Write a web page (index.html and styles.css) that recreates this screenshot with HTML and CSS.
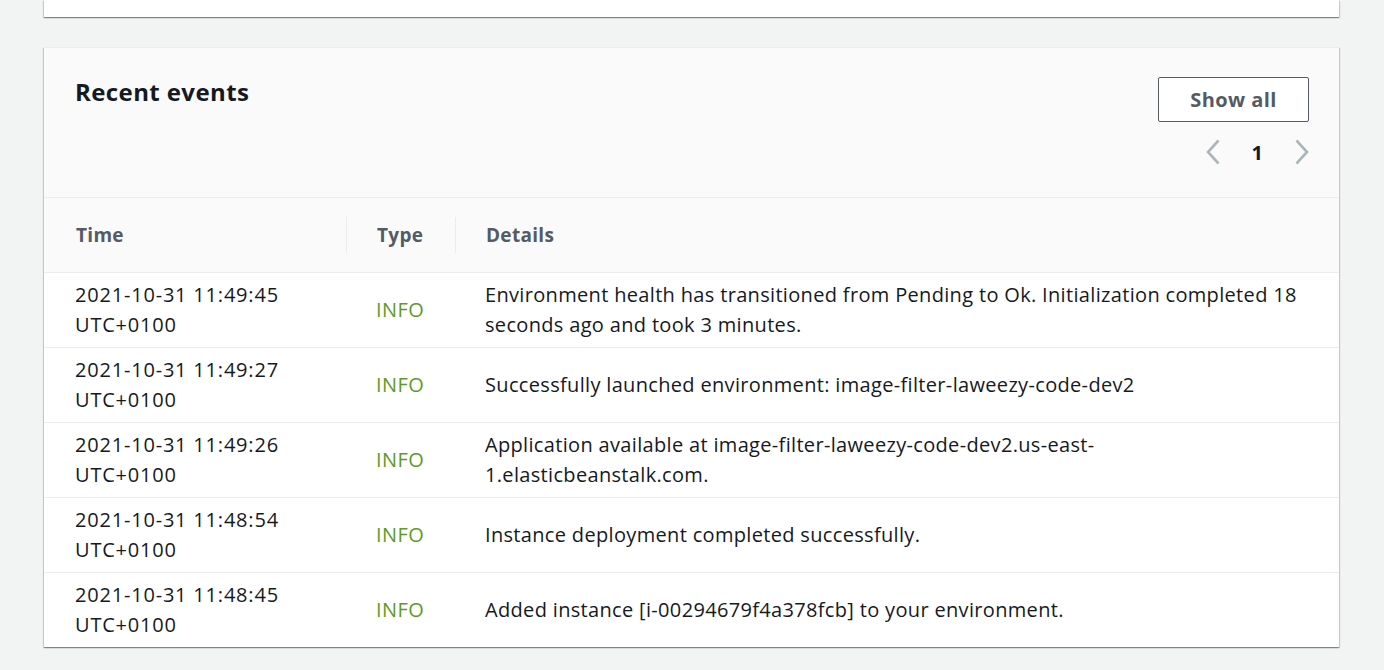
FILE: index.html
```html
<!DOCTYPE html>
<html>
<head>
<meta charset="utf-8">
<link rel="stylesheet" href="styles.css">
</head>
<body>
<div class="page">
  <div class="card top-card"></div>
  <div class="card events">
    <div class="events-header">
      <h2 class="title">Recent events</h2>
      <div class="actions">
        <button class="btn">Show all</button>
        <div class="pager">
          <span class="chev"><svg width="14" height="26" viewBox="0 0 14 26"><path d="M12.5 1.5 L2 13 L12.5 24.5" fill="none" stroke="#aab7b8" stroke-width="2.6"/></svg></span>
          <span class="page-num">1</span>
          <span class="chev"><svg width="14" height="26" viewBox="0 0 14 26"><path d="M1.5 1.5 L12 13 L1.5 24.5" fill="none" stroke="#aab7b8" stroke-width="2.6"/></svg></span>
        </div>
      </div>
    </div>
    <table class="tbl">
      <colgroup><col class="c-time"><col class="c-type"><col class="c-det"></colgroup>
      <thead>
        <tr>
          <th><div class="th-in">Time</div></th>
          <th><div class="th-in sep">Type</div></th>
          <th><div class="th-in sep">Details</div></th>
        </tr>
      </thead>
      <tbody>
        <tr><td class="time">2021-10-31 11:49:45<br>UTC+0100</td><td class="info">INFO</td><td class="det">Environment health has transitioned from Pending to Ok. Initialization completed 18 seconds ago and took 3 minutes.</td></tr>
        <tr><td class="time">2021-10-31 11:49:27<br>UTC+0100</td><td class="info">INFO</td><td class="det">Successfully launched environment: image-filter-laweezy-code-dev2</td></tr>
        <tr><td class="time">2021-10-31 11:49:26<br>UTC+0100</td><td class="info">INFO</td><td class="det">Application available at image-filter-laweezy-code-dev2.us-east-<br>1.elasticbeanstalk.com.</td></tr>
        <tr><td class="time">2021-10-31 11:48:54<br>UTC+0100</td><td class="info">INFO</td><td class="det">Instance deployment completed successfully.</td></tr>
        <tr><td class="time">2021-10-31 11:48:45<br>UTC+0100</td><td class="info">INFO</td><td class="det">Added instance [i-00294679f4a378fcb] to your environment.</td></tr>
      </tbody>
    </table>
  </div>
</div>
</body>
</html>
```

FILE: styles.css
```css
* { box-sizing: border-box; }
html, body { margin: 0; padding: 0; }
body {
  background: #f2f3f3;
  font-family: "Open Sans", "Noto Sans", sans-serif;
  color: #16191f;
  width: 1384px;
  height: 670px;
  overflow: hidden;
}
.page {
  display: flex;
  flex-direction: column;
  gap: 30px;
  padding: 0 45px 0 44px;
}
.card {
  background: #fff;
  box-shadow: 0 1px 1px 0 rgba(0,28,36,.3), 1px 1px 1px 0 rgba(0,28,36,.15), -1px 1px 1px 0 rgba(0,28,36,.15);
}
.top-card {
  height: 17px;
}
.events {
  border-top: 1px solid #eaeded;
}
.events-header {
  background: #fafafa;
  display: flex;
  justify-content: space-between;
  padding: 28px 30px 0 31px;
  height: 150px;
  border-bottom: 1px solid #eaeded;
}
.title {
  margin: 0;
  font-size: 24px;
  font-weight: 700;
  line-height: 32px;
  letter-spacing: 0.4px;
}
.actions {
  display: flex;
  flex-direction: column;
  align-items: flex-end;
  padding-top: 1px;
}
.btn {
  width: 151px;
  height: 45px;
  border: 1px solid #545b64;
  border-radius: 2px;
  background: #fff;
  color: #545b64;
  font-family: inherit;
  font-size: 20px;
  font-weight: 700;
  letter-spacing: 0.4px;
  margin: 0;
  padding: 0;
}
.pager {
  display: flex;
  align-items: center;
  gap: 32px;
  margin-top: 17px;
  height: 26px;
}
.chev { display: flex; }
.page-num {
  font-weight: 700;
  font-size: 20px;
}
.tbl {
  width: 100%;
  border-collapse: collapse;
  table-layout: fixed;
}
.c-time { width: 302px; }
.c-type { width: 109px; }
thead th {
  background: #fafafa;
  height: 74px;
  padding: 0;
  text-align: left;
  font-weight: 700;
  font-size: 19px;
  letter-spacing: 0.3px;
  color: #545b64;
  border-bottom: 1px solid #eaeded;
}
.th-in {
  padding-left: 32px;
  line-height: 36px;
}
.th-in.sep {
  border-left: 1px solid #eaeded;
  padding-left: 30px;
}
tbody td {
  height: 75px;
  padding: 0 0 0 31px;
  font-size: 20px;
  letter-spacing: 0.45px;
  line-height: 30px;
  border-bottom: 1px solid #eaeded;
  vertical-align: middle;
}
tbody td.time { letter-spacing: 0.8px; }
tbody td.info { padding-left: 30px; }
tbody td.det { padding-left: 30px; padding-right: 30px; letter-spacing: 0.33px; }
tbody tr:last-child td { border-bottom: none; }
.info { color: #5e9b26; }
```
